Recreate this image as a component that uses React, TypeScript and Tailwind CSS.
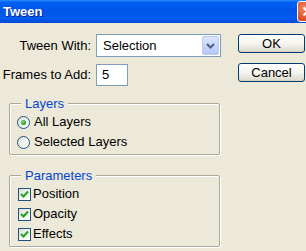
import React from "react";

const font = { fontFamily: '"Liberation Sans", Arial, sans-serif' };

function Radio({ checked, label }: { checked?: boolean; label: string }) {
  return (
    <label className="flex h-[20px] items-center gap-[4px]">
      <span className="flex h-[13px] w-[13px] items-center justify-center rounded-full border border-[#1c5180] bg-gradient-to-br from-[#dcdcd5] via-[#f3f3ef] to-white">
        {checked && (
          <span className="h-[5px] w-[5px] rounded-full bg-[radial-gradient(circle_at_40%_40%,#8be08b,#21a121_60%,#1a8a1a)]" />
        )}
      </span>
      <span>{label}</span>
    </label>
  );
}

function Check({ label }: { label: string }) {
  return (
    <label className="flex h-[20px] items-center gap-[2px] pl-[1px]">
      <span className="flex h-[13px] w-[13px] items-center justify-center border border-[#1c5180] bg-gradient-to-br from-[#dcdcd5] via-[#f3f3ef] to-white">
        <svg width="9" height="9" viewBox="0 0 9 9">
          <path d="M1 4 L3.5 6.5 L8 1.5" fill="none" stroke="#21a121" strokeWidth="2" />
        </svg>
      </span>
      <span>{label}</span>
    </label>
  );
}

function Group({ title, children }: { title: string; children: React.ReactNode }) {
  return (
    <fieldset className="ml-[9px] w-[211px] rounded-[2px] border border-[#aca899] px-[7px] pt-[1px] pb-[2px] shadow-[1px_1px_0_#fff,inset_1px_1px_0_#fff]">
      <legend className="ml-[4px] bg-[#ece9d8] px-[4px] leading-[15px] text-[#0046d5]">{title}</legend>
      {children}
    </fieldset>
  );
}

function XpButton({ children }: { children: React.ReactNode }) {
  return (
    <button className="flex h-[19px] w-[67px] items-center justify-center rounded-[3px] border border-[#003c74] bg-gradient-to-b from-white via-[#f5f4ef] to-[#dcd9cc] text-[13px] leading-none text-black shadow-[inset_0_-1px_0_#d6d0c5]">
      {children}
    </button>
  );
}

export default function App() {
  return (
    <div className="h-[251px] w-[306px] overflow-hidden bg-[#ece9d8] text-[13px] text-black" style={font}>
      <div className="relative flex h-[23px] items-center overflow-hidden bg-[linear-gradient(to_bottom,#2a8dff_0%,#0061f2_10%,#0055ea_45%,#005cf0_80%,#0048d4_100%)] pl-[3px]">
        <span className="text-[13px] font-bold text-white [text-shadow:1px_1px_0_#0a1e8c]">Tween</span>
        {/* close button, mostly cropped by the screenshot edge */}
        <div className="absolute left-[297px] top-[1px] flex h-[21px] w-[21px] items-center justify-center rounded-[3px] border border-white bg-[radial-gradient(circle_at_35%_35%,#f08a6a,#e0532f_55%,#c23a1a)]">
          <svg width="11" height="11" viewBox="0 0 11 11">
            <path d="M1.5 1.5 L9.5 9.5 M9.5 1.5 L1.5 9.5" stroke="#fff" strokeWidth="2" />
          </svg>
        </div>
      </div>
      <div className="flex pt-[11px]">
        <div className="w-[222px]">
          <div className="flex items-center">
            <span className="w-[91px] text-right">Tween With:</span>
            <div className="ml-[5px] flex h-[23px] w-[125px] items-center border border-[#7f9db9] bg-white pl-[6px] pr-[1px]">
              <span className="flex-1">Selection</span>
              <span className="flex h-[19px] w-[17px] items-center justify-center rounded-[2px] border border-[#b9c9ef] bg-gradient-to-b from-[#dbe6fd] to-[#b4c8f6]">
                <svg width="9" height="6" viewBox="0 0 9 6">
                  <path d="M1 1 L4.5 4.5 L8 1" fill="none" stroke="#4d6185" strokeWidth="2" />
                </svg>
              </span>
            </div>
          </div>
          <div className="mt-[7px] flex items-center">
            <span className="w-[91px] text-right">Frames to Add:</span>
            <div className="ml-[5px] flex h-[22px] w-[32px] items-center border border-[#7f9db9] bg-white pl-[5px]">5</div>
          </div>
          <div className="mt-[10px]">
            <Group title="Layers">
              <Radio checked label="All Layers" />
              <Radio label="Selected Layers" />
            </Group>
          </div>
          <div className="mt-[13px]">
            <Group title="Parameters">
              <Check label="Position" />
              <Check label="Opacity" />
              <Check label="Effects" />
            </Group>
          </div>
        </div>
        <div className="ml-[16px] flex flex-col gap-[10px]">
          <XpButton>OK</XpButton>
          <XpButton>Cancel</XpButton>
        </div>
      </div>
    </div>
  );
}
